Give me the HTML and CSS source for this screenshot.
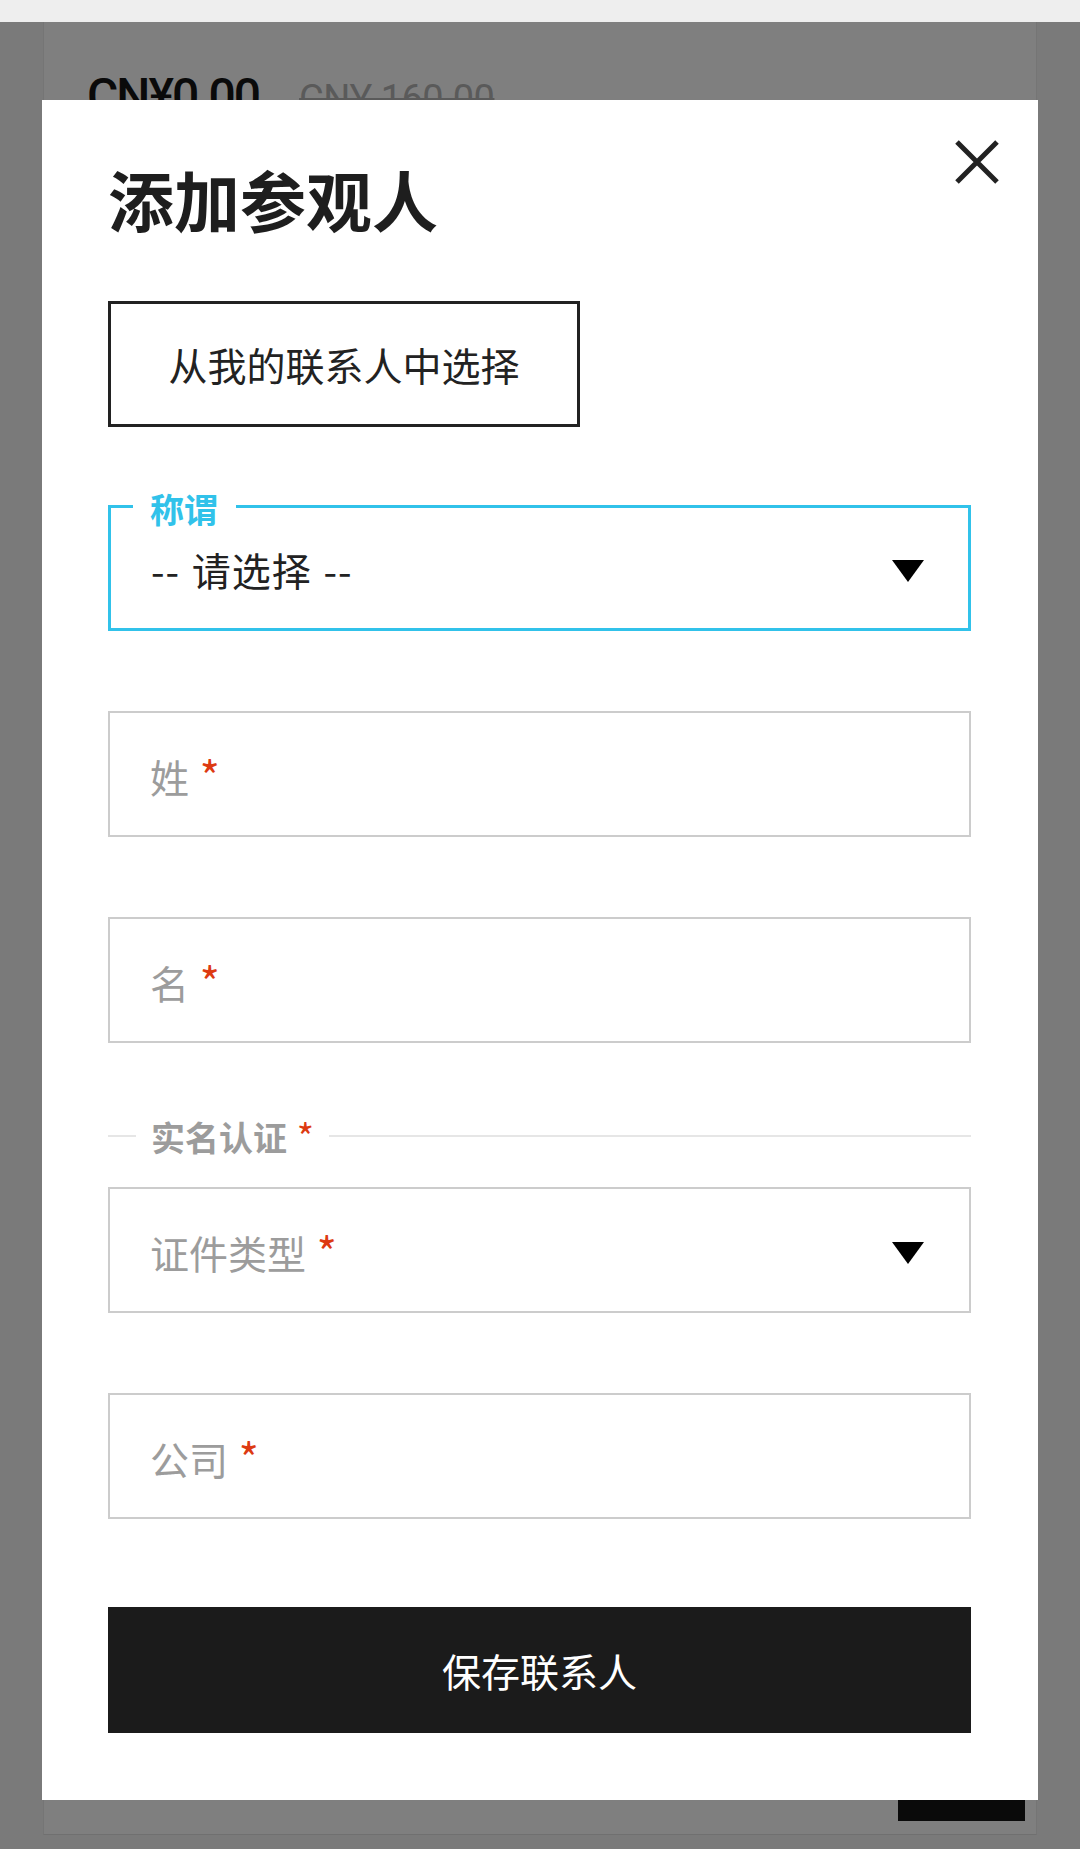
FILE: index.html
```html
<!DOCTYPE html>
<html lang="zh-CN">
<head>
<meta charset="utf-8">
<title>添加参观人</title>
<link rel="stylesheet" href="styles.css">
</head>
<body>
<div class="topbar"></div>
<main class="page">
  <div class="card">
    <div class="price">
      <span class="price-now">CN¥0.00</span>
      <span class="price-old">CNY 160.00</span>
    </div>
    <div class="buy"></div>
  </div>
</main>

<div class="overlay">
  <div class="modal">
    <button class="close" aria-label="关闭">
      <svg width="44" height="44" viewBox="0 0 44 44"><path d="M2 2 L42 42 M42 2 L2 42" stroke="#222" stroke-width="5" fill="none"/></svg>
    </button>
    <h1 class="title">添加参观人</h1>
    <button class="pick">从我的联系人中选择</button>

    <div class="field field-active">
      <span class="float-label">称谓</span>
      <span class="value">-- 请选择 --</span>
      <svg class="caret" width="32" height="22" viewBox="0 0 32 22"><polygon points="0,0 32,0 16,22" fill="#000"/></svg>
    </div>

    <div class="field gap">
      <span class="placeholder">姓 <span class="req">*</span></span>
    </div>

    <div class="field gap">
      <span class="placeholder">名 <span class="req">*</span></span>
    </div>

    <div class="divider">
      <span class="divider-label">实名认证 <span class="req">*</span></span>
    </div>

    <div class="field field-after-divider">
      <span class="placeholder">证件类型 <span class="req">*</span></span>
      <svg class="caret" width="32" height="22" viewBox="0 0 32 22"><polygon points="0,0 32,0 16,22" fill="#000"/></svg>
    </div>

    <div class="field gap">
      <span class="placeholder">公司 <span class="req">*</span></span>
    </div>

    <button class="save">保存联系人</button>
  </div>
</div>
</body>
</html>
```

FILE: styles.css
```css
html, body {
  margin: 0;
  padding: 0;
}

body {
  width: 1080px;
  height: 1849px;
  overflow: hidden;
  background: #f4f4f4;
  font-family: "Noto Sans CJK SC", "Noto Sans", sans-serif;
}

.topbar {
  height: 22px;
  background: #eeeeee;
}

.page {
  padding: 0 43px 0 43px;
}

.card {
  box-sizing: border-box;
  height: 1813px;
  background: #ffffff;
  border-left: 1px solid #ebebeb;
  border-right: 1px solid #ebebeb;
  border-bottom: 1px solid #e0e0e0;
  padding: 48px 11px 13px 43px;
  display: flex;
  flex-direction: column;
}

.price {
  display: flex;
  align-items: baseline;
  gap: 40px;
  line-height: 52px;
}

.price-now {
  font-family: Roboto, "Liberation Sans", sans-serif;
  font-size: 48px;
  font-weight: 500;
  color: #141414;
  letter-spacing: -2px;
}

.price-old {
  font-family: Roboto, "Liberation Sans", sans-serif;
  font-size: 38px;
  color: #b4b4b4;
  text-decoration: line-through;
  letter-spacing: -0.5px;
}

.buy {
  margin-top: auto;
  align-self: flex-end;
  width: 127px;
  height: 62px;
  background: #141414;
}

.overlay {
  position: fixed;
  top: 22px;
  left: 0;
  right: 0;
  bottom: 0;
  background: rgba(0, 0, 0, 0.5);
}

.modal {
  position: relative;
  box-sizing: border-box;
  margin: 78px 42px 0 42px;
  height: 1700px;
  background: #ffffff;
  padding: 58px 67px 0 66px;
  display: flex;
  flex-direction: column;
}

.close {
  position: absolute;
  top: 40px;
  right: 39px;
  width: 44px;
  height: 44px;
  padding: 0;
  border: 0;
  background: none;
}

.close svg {
  display: block;
}

.title {
  margin: 0;
  font-size: 66px;
  line-height: 80px;
  font-weight: 700;
  color: #1e1e1e;
}

.pick {
  align-self: flex-start;
  box-sizing: border-box;
  margin-top: 63px;
  height: 126px;
  width: 472px;
  padding: 0;
  border: 3px solid #222222;
  background: #ffffff;
  font-family: "Noto Sans CJK SC", sans-serif;
  font-size: 39px;
  color: #222222;
}

.field {
  position: relative;
  box-sizing: border-box;
  height: 126px;
  border: 2px solid #cccccc;
  display: flex;
  align-items: center;
  justify-content: space-between;
  padding: 0 45px 0 40px;
}

.field.gap {
  margin-top: 80px;
}

.field-active {
  margin-top: 78px;
  border: 3px solid #31c2ea;
  padding-left: 40px;
  padding-right: 44px;
}

.field-after-divider {
  margin-top: 31px;
}

.float-label {
  position: absolute;
  top: -19px;
  left: 22px;
  padding: 0 18px 0 17px;
  background: #ffffff;
  font-size: 34px;
  line-height: 40px;
  font-weight: 700;
  color: #31c2ea;
}

.value {
  font-size: 39px;
  color: #222222;
  padding-top: 2px;
  letter-spacing: 1px;
  word-spacing: 2px;
}

.placeholder {
  font-size: 39px;
  color: #9c9c9c;
}

.req {
  color: #dd3a12;
  font-size: 43px;
  margin-left: 2px;
}

.caret {
  display: block;
  margin-top: 5px;
}

.divider {
  margin-top: 73px;
  height: 40px;
  display: flex;
  align-items: center;
}

.divider::before {
  content: "";
  width: 28px;
  height: 2px;
  background: #e6e6e6;
}

.divider::after {
  content: "";
  flex: 1;
  height: 2px;
  background: #e6e6e6;
}

.divider-label {
  padding: 0 15px;
  font-size: 34px;
  line-height: 40px;
  font-weight: 700;
  color: #9c9c9c;
}

.divider-label .req {
  font-weight: 400;
  font-size: 37px;
}

.save {
  margin-top: 88px;
  height: 126px;
  border: 0;
  padding: 0;
  background: #1b1b1b;
  color: #ffffff;
  font-family: "Noto Sans CJK SC", sans-serif;
  font-size: 39px;
}
```
